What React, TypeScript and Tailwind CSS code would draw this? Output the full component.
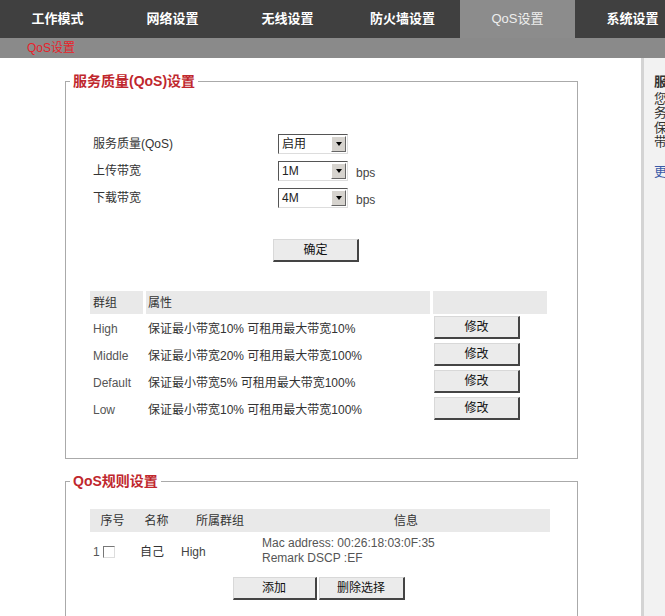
import React from 'react';

const tabs = ['工作模式', '网络设置', '无线设置', '防火墙设置', 'QoS设置', '系统设置'];

const groups = [
  { name: 'High', attr: '保证最小带宽10% 可租用最大带宽10%' },
  { name: 'Middle', attr: '保证最小带宽20% 可租用最大带宽100%' },
  { name: 'Default', attr: '保证最小带宽5% 可租用最大带宽100%' },
  { name: 'Low', attr: '保证最小带宽10% 可租用最大带宽100%' },
];

const font = { fontFamily: '"Liberation Sans", Arial, "Noto Sans CJK SC", sans-serif' };

const Select = ({ value }: { value: string }) => (
  <div className="flex h-[20px] w-[70px] items-stretch border border-t-[#555] border-l-[#555] border-b-[#ddd] border-r-[#ddd] bg-white">
    <span className="flex-1 pl-[3px] text-[12px] leading-[18px] text-[#222]">{value}</span>
    <span className="m-[1px] flex w-[15px] items-center justify-center border border-t-[#fff] border-l-[#fff] border-b-[#666] border-r-[#666] bg-[#d6d3ce]">
      <span className="h-0 w-0 border-x-[3.5px] border-t-[4px] border-x-transparent border-t-black" />
    </span>
  </div>
);

const Btn = ({ label, w }: { label: string; w: string }) => (
  <button
    type="button"
    className={`${w} h-[23px] border border-t-[#d8d8d8] border-l-[#d8d8d8] border-b-2 border-r-2 border-b-[#444] border-r-[#444] bg-[#ebebeb] text-[12px] text-[#111]`}
  >
    {label}
  </button>
);

export default function App() {
  return (
    <div className="h-[616px] w-[665px] overflow-hidden bg-white" style={font}>
      <div className="flex h-[38px] bg-[#404040]">
        {tabs.map((t) => (
          <div
            key={t}
            className={
              t === 'QoS设置'
                ? 'flex w-[115px] shrink-0 items-center justify-center bg-[#8c8c8c] text-[13px] text-[#eee]'
                : 'flex w-[115px] shrink-0 items-center justify-center text-[13px] font-bold text-white'
            }
          >
            {t}
          </div>
        ))}
      </div>
      <div className="flex h-[20px] items-center bg-[#8a8a8a] pl-[27px] text-[12px] text-[#e8222a]">QoS设置</div>

      <div className="flex">
        <div className="w-[641px] shrink-0 pt-[14px]">
          <fieldset className="ml-[65px] w-[513px] border border-[#aaa] px-0 pb-[36px]">
            <legend className="ml-[4px] px-[3px] text-[14px] font-bold leading-[18px] text-[#c0272d]">服务质量(QoS)设置</legend>
            <div className="px-[24px]">
              <div className="pt-[40px] text-[12px] text-[#333]">
                {[
                  ['服务质量(QoS)', '启用', false],
                  ['上传带宽', '1M', true],
                  ['下载带宽', '4M', true],
                ].map(([label, val, bps]) => (
                  <div key={label as string} className="flex h-[27px] items-center pl-[3px]">
                    <span className="w-[185px]">{label}</span>
                    <Select value={val as string} />
                    {bps ? <span className="ml-[8px] mt-[4px] text-[#444]">bps</span> : null}
                  </div>
                ))}
              </div>

              <div className="mt-[28px] flex pl-[183px]">
                <Btn label="确定" w="w-[86px]" />
              </div>

              <div className="mt-[29px] grid grid-cols-[53px_284px_114px] gap-x-[3px] text-[12px]">
                <div className="flex h-[23px] items-center bg-[#e9e9e9] pl-[3px] text-[#333]">群组</div>
                <div className="flex h-[23px] items-center bg-[#e9e9e9] pl-[2px] text-[#333]">属性</div>
                <div className="h-[23px] bg-[#e9e9e9]" />
                {groups.map((g) => (
                  <React.Fragment key={g.name}>
                    <div className="flex h-[27px] items-center pl-[3px] pt-[3px] text-[#555]">{g.name}</div>
                    <div className="flex h-[27px] items-center pl-[2px] pt-[3px] text-[#333]">{g.attr}</div>
                    <div className="flex h-[27px] items-center pl-[1px]">
                      <Btn label="修改" w="w-[86px]" />
                    </div>
                  </React.Fragment>
                ))}
              </div>
            </div>
          </fieldset>

          <fieldset className="ml-[65px] mt-[13px] w-[513px] border border-[#aaa] px-0 pb-[20px]">
            <legend className="ml-[4px] px-[3px] text-[14px] font-bold leading-[18px] text-[#c0272d]">QoS规则设置</legend>
            <div className="px-[24px]">
              <div className="mt-[19px] grid w-[460px] grid-cols-[45px_43px_84px_288px] text-[12px] text-[#333]">
                <div className="flex h-[23px] items-center justify-center bg-[#e9e9e9]">序号</div>
                <div className="flex h-[23px] items-center justify-center bg-[#e9e9e9]">名称</div>
                <div className="flex h-[23px] items-center justify-center bg-[#e9e9e9]">所属群组</div>
                <div className="flex h-[23px] items-center justify-center bg-[#e9e9e9]">信息</div>
                <div className="flex h-[36px] items-center pl-[3px] pt-[4px] text-[#555]">
                  1
                  <span className="ml-[3px] inline-block h-[12px] w-[12px] border border-t-[#777] border-l-[#777] border-b-[#ddd] border-r-[#ddd] bg-white" />
                </div>
                <div className="flex h-[36px] items-center pl-[5px] pt-[4px]">自己</div>
                <div className="flex h-[36px] items-center pl-[3px] pt-[4px] text-[#444]">High</div>
                <div className="flex h-[36px] flex-col justify-center pt-[1px] leading-[15px] text-[#555]">
                  <span>Mac address: 00:26:18:03:0F:35</span>
                  <span>Remark DSCP :EF</span>
                </div>
              </div>
              <div className="mt-[9px] flex w-[460px] justify-center gap-[2px] pr-[3px]">
                <Btn label="添加" w="w-[84px]" />
                <Btn label="删除选择" w="w-[86px]" />
              </div>
            </div>
          </fieldset>
        </div>

        <div className="flex-1 overflow-hidden border-l-[3px] border-l-[#d4d4d4] bg-[#f2f2f2] pl-[10px] pt-[16px]">
          <div className="w-[200px] whitespace-nowrap text-[13px] leading-[14.5px] text-[#333]" style={{ fontFamily: '"Noto Sans CJK SC", sans-serif' }}>
            <div className="font-bold">服务质量</div>
            <div className="mt-[2px]">您可以通过服</div>
            <div>务质量设置</div>
            <div>保证重要应用</div>
            <div>带宽</div>
            <div className="mt-[15px] text-[#3a5aa8]">更多...</div>
          </div>
        </div>
      </div>
    </div>
  );
}
